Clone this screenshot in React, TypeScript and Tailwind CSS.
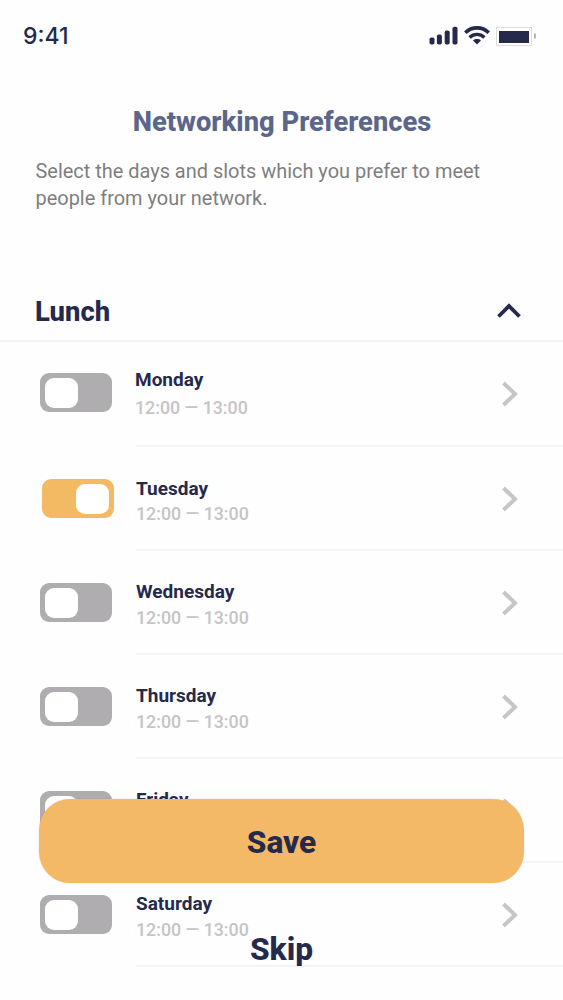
import { useState } from "react";

const days = [
  { name: "Monday", toggle: "mt-[31px] ml-10", text: "pt-[26px] pl-[23px]", gap: "mt-1", arrow: "mt-[39px]" },
  { name: "Tuesday", toggle: "mt-[33px] ml-[41.5px]", text: "pt-[31px] pl-[22.5px]", gap: "mt-px", arrow: "mt-[39.5px]" },
  { name: "Wednesday", toggle: "mt-[33px] ml-10", text: "pt-[30px] pl-6", gap: "mt-[2px]", arrow: "mt-[39.5px]" },
  { name: "Thursday", toggle: "mt-[33px] ml-10", text: "pt-[30px] pl-6", gap: "mt-[2px]", arrow: "mt-[40px]" },
  { name: "Friday", toggle: "mt-[33px] ml-10", text: "pt-[30px] pl-6", gap: "mt-[2px]", arrow: "mt-[40px]" },
  { name: "Saturday", toggle: "mt-[33px] ml-10", text: "pt-[30px] pl-6", gap: "mt-[2px]", arrow: "mt-[40px]" },
];

function StatusBar() {
  return (
    <div className="flex h-[72px] items-center justify-between pl-[23px] pr-[27px]">
      <span className="font-['Inter'] text-[23px] font-medium leading-[28px]">9:41</span>
      <div className="flex items-center">
        <svg width="29" height="20" viewBox="0 0 29 20" fill="currentColor">
          <rect x="0.5" y="11.5" width="5" height="7" rx="1.8" />
          <rect x="7.9" y="8.5" width="5" height="10" rx="1.8" />
          <rect x="15.7" y="4.5" width="5" height="14" rx="1.8" />
          <rect x="23.5" y="0.8" width="5" height="17.7" rx="1.8" />
        </svg>
        <svg className="ml-[6px]" width="26" height="20" viewBox="0 0 26 20" fill="none" stroke="currentColor">
          <path d="M1.3 6.8C7.8.2 18.2.2 24.7 6.8" strokeWidth="3.6" />
          <path d="M5.6 11.4c4.2-4 10.6-4 14.8 0" strokeWidth="3.4" />
          <path d="M9 14.4c2.3-1.9 5.7-1.9 8 0l-4 4z" fill="currentColor" stroke="none" />
        </svg>
        <div className="ml-[6px] h-[19px] w-9 border border-[#dcdce2] px-[2px] pt-[3px] pb-[2px]">
          <div className="h-full w-[30px] bg-[#252a4d]"></div>
        </div>
        <div className="ml-[2px] h-[6px] w-[2px] rounded-r-full bg-[#b5b5bd]"></div>
      </div>
    </div>
  );
}

function Toggle({ on, className, onClick }: { on: boolean; className: string; onClick: () => void }) {
  return (
    <button
      onClick={onClick}
      className={`flex h-[39px] w-[72px] shrink-0 items-center rounded-[9px] px-[4.5px] ${on ? "justify-end bg-[#f3ba63]" : "bg-[#b0adb0]"} ${className}`}
    >
      <span className="h-[30px] w-[33px] rounded-[9px] bg-white"></span>
    </button>
  );
}

export default function App() {
  const [selected, setSelected] = useState(["Tuesday"]);

  const toggleDay = (name: string) => {
    setSelected(selected.includes(name) ? selected.filter((d) => d !== name) : [...selected, name]);
  };

  return (
    <div className="relative h-[1000px] w-[563px] overflow-hidden bg-[#fefefe] font-['Roboto',sans-serif] text-[#252a4d]">
      <StatusBar />
      <h1 className="mt-[34px] pl-px text-center text-[27.3px] font-extrabold leading-8 text-[#5b668a]">Networking Preferences</h1>
      <p className="mt-5 pl-[35.5px] text-[19.95px] leading-[27px] text-[#7e7e7e]">
        Select the days and slots which you prefer to meet
        <br />
        people from your network.
      </p>
      <div className="mt-[69px] flex h-[61px] justify-between border-b-2 border-[#f5f5f5] pl-[35px] pr-[41px]">
        <h2 className="pt-[15px] text-[27.4px] font-extrabold leading-8">Lunch</h2>
        <svg className="mt-[20px]" width="26" height="18" viewBox="0 0 26 18" fill="none" stroke="currentColor" strokeWidth="3.8">
          <path d="M2.5 15.5 13 5l10.5 10.5" />
        </svg>
      </div>
      <ul>
        {days.map((day) => (
          <li key={day.name} className="flex h-[104px] items-start">
            <Toggle on={selected.includes(day.name)} className={day.toggle} onClick={() => toggleDay(day.name)} />
            <div className="flex h-full flex-1 flex-col">
              <div className="flex flex-1 justify-between pr-[44px]">
                <div className={day.text}>
                  <p className="text-[19px] font-bold leading-6">{day.name}</p>
                  <p className={`text-[17.8px] font-medium leading-6 text-[#c5c4c6] ${day.gap}`}>12:00 — 13:00</p>
                </div>
                <svg className={day.arrow} width="18" height="26" viewBox="0 0 18 26" fill="none" stroke="#c6c6c6" strokeWidth="4">
                  <path d="M2.5 2 14 13 2.5 24" />
                </svg>
              </div>
              <div className={`relative top-px h-[2px] bg-[#f5f5f5] ${day.name === "Tuesday" ? "ml-[22.5px]" : "ml-6"}`}></div>
            </div>
          </li>
        ))}
      </ul>
      <div className="absolute inset-x-0 bottom-0 flex flex-col items-center">
        <button className="h-[84px] w-[485px] rounded-[31px] bg-[#f4b966] pt-[3px] text-[31.7px] font-extrabold leading-9 shadow-[0_0_2px_rgba(0,0,0,0.12)]">Save</button>
        <button className="mt-[49px] mb-8 text-[31.7px] font-extrabold leading-9">Skip</button>
      </div>
    </div>
  );
}
